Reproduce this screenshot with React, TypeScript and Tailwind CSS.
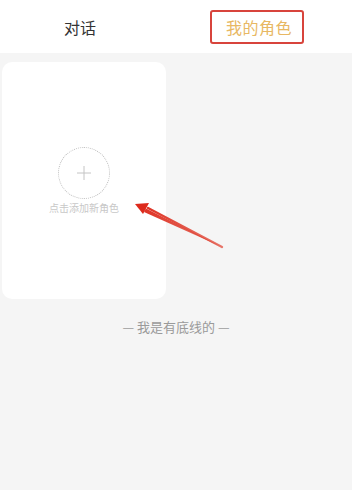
import React from "react"

const font = { fontFamily: '"Noto Sans CJK SC", "Noto Sans", sans-serif' }

function Header() {
  return (
    <div className="flex h-[53px] items-center bg-white">
      <div className="flex w-1/2 justify-center pr-[16px] text-[16px] text-[#333]">对话</div>
      <div className="flex w-1/2 justify-center pr-[14px]">
        <div className="flex h-[34px] w-[94px] items-center justify-center rounded-[3px] border-2 border-[#d8443c] pl-[4px] text-[16px] tracking-[0.5px] text-[#e8b863]">
          我的角色
        </div>
      </div>
    </div>
  )
}

function AddCard() {
  return (
    <div className="flex h-[237px] w-[164px] flex-col items-center justify-center rounded-[10px] bg-white">
      <div className="flex h-[52px] w-[52px] items-center justify-center rounded-full border border-dotted border-[#bdbdbd]">
        <svg width="14" height="14" viewBox="0 0 14 14">
          <path d="M7 0v14M0 7h14" stroke="#c4c4c4" strokeWidth="1" />
        </svg>
      </div>
      <div className="mt-[2px] text-[10px] leading-[14px] text-[#c8c8c8]">点击添加新角色</div>
    </div>
  )
}

export default function App() {
  return (
    <div className="relative h-[490px] w-[352px] overflow-hidden bg-[#f5f5f5]" style={font}>
      <Header />
      <div className="px-[2px] pt-[9px]">
        <AddCard />
      </div>
      <div className="mt-[18px] text-center text-[13px] text-[#9a9a9a]">— 我是有底线的 —</div>
      {/* annotation arrow */}
      <svg className="pointer-events-none absolute left-0 top-0" width="352" height="490">
        <defs>
          <linearGradient id="ag" x1="222" y1="247" x2="136" y2="204" gradientUnits="userSpaceOnUse">
            <stop offset="0" stopColor="#e0402f" stopOpacity="0.7" />
            <stop offset="1" stopColor="#dd2a1c" />
          </linearGradient>
        </defs>
        <path d="M222 247 L146 208.5 L144 212 Z" fill="url(#ag)" />
        <path d="M222 247 L148 208" stroke="url(#ag)" strokeWidth="2.4" strokeLinecap="round" />
        <path d="M135 204 L149 203 L143 214 Z" fill="#dd2a1c" />
      </svg>
    </div>
  )
}
